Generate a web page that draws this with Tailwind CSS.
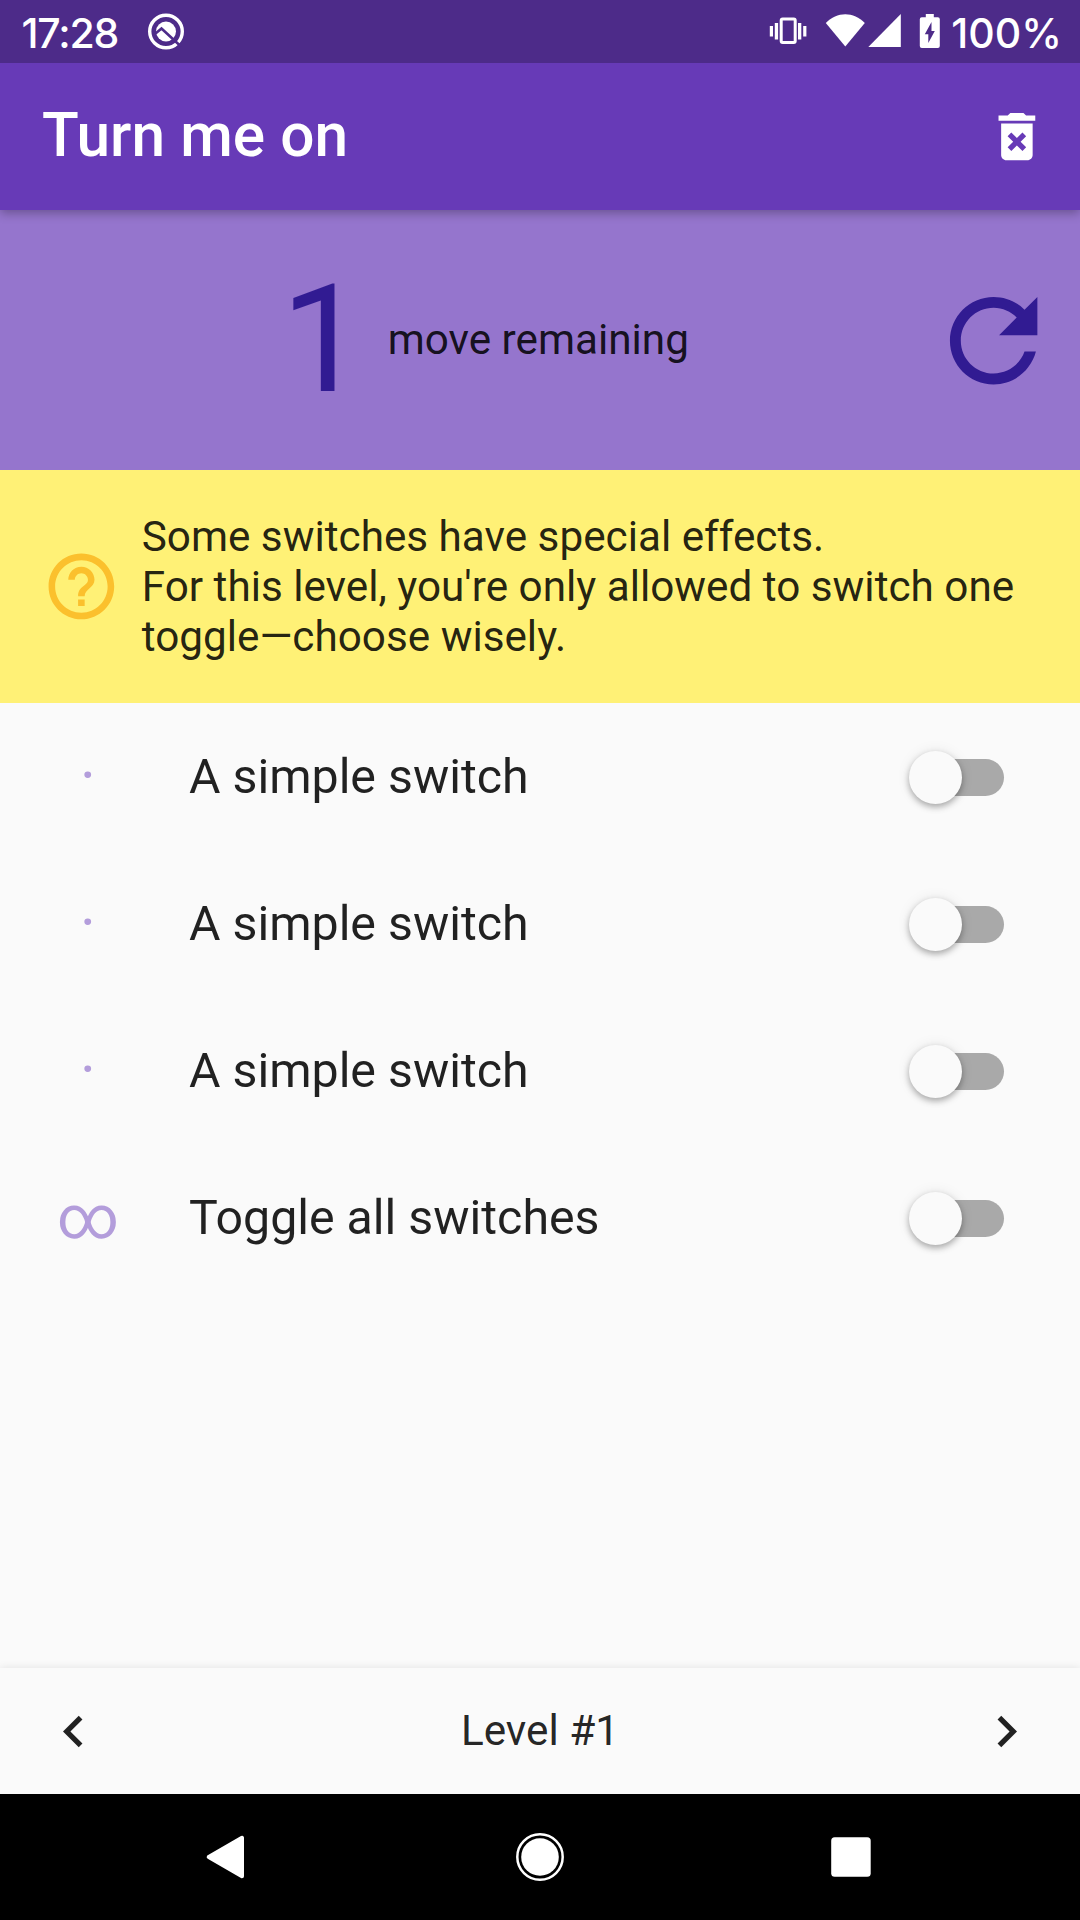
<!DOCTYPE html>
<html lang="en">
<head>
<meta charset="utf-8">
<title>Turn me on</title>
<script src="https://cdn.jsdelivr.net/npm/@tailwindcss/browser@4"></script>
</head>
<body class="bg-[#fafafa]">
<div class="flex flex-col w-[1080px] h-[1920px] overflow-hidden bg-[#fafafa] text-black/87 font-['Roboto',sans-serif]">

  <!-- Status bar -->
  <div class="relative z-20 flex items-center justify-between h-[63px] shrink-0 bg-[#4d2b89] text-white pl-[21.5px] pr-[18px] font-['Inter',sans-serif] font-medium text-[41px] leading-[63px]">
    <div class="flex items-center">
      <span class="tracking-[-1.2px] w-[122.5px] pt-[3px]">17:28</span>
      <svg class="w-[44px] h-[63px]" viewBox="144 0 44 63">
        <circle cx="166" cy="31.5" r="16.3" fill="none" stroke="#fff" stroke-width="3.4"/>
        <circle cx="166" cy="31.5" r="10" fill="#fff"/>
        <path d="M155.500 33.500L161.500 28.500L181 46.500" fill="none" stroke="#4d2b89" stroke-width="2.6"/>
      </svg>
    </div>
    <div class="flex items-center">
      <svg class="w-[184px] h-[63px]" viewBox="767.2 0 184 63" fill="#fff">
        <rect x="781.4" y="19" width="14" height="23.6" rx="1.5" fill="none" stroke="#fff" stroke-width="3"/>
        <path d="M775 23h3.3v16.5H775zM770 26h3.2v10.5H770zM798.2 23h3.3v16.5h-3.3zM803.4 26h3.2v10.5h-3.2z"/>
        <path d="M826 23C837 11.3 854 11.3 865 23L845.5 46.5Z"/>
        <path d="M868.5 47L901 14V47Z"/>
        <path fill-rule="evenodd" d="M926 14h8v3.3h4a2 2 0 0 1 2 2V46a2 2 0 0 1-2 2h-16a2 2 0 0 1-2-2V19.300a2 2 0 0 1 2-2h4zM931.700 22L925 34.200h3.500V43L935 31h-3.300z"/>
      </svg>
      <span class="pt-[3px]">100%</span>
    </div>
  </div>

  <!-- App bar -->
  <div class="relative z-10 flex items-center justify-between h-[147px] shrink-0 bg-[#673ab7] text-white pl-[42px] pr-[32px] shadow-[0_3px_10px_rgba(0,0,0,0.3)]">
    <h1 class="font-medium text-[60.375px] leading-[72px] tracking-[0.07px] pb-[2px]">Turn me on</h1>
    <svg class="size-[63px]" viewBox="-0.15 0 24 24" fill="currentColor"><path d="M6 19c0 1.100.9 2 2 2h8c1.100 0 2-.9 2-2V7H6v12zm2.460-7.120l1.410-1.410L12 12.590l2.120-2.120 1.410 1.410L13.410 14l2.120 2.120-1.410 1.410L12 15.410l-2.120 2.120-1.410-1.410L10.590 14l-2.130-2.120zM15.500 4l-1-1h-5l-1 1H5v2h14V4z"/></svg>
  </div>

  <!-- Remaining moves -->
  <div class="flex items-center h-[259.5px] shrink-0 bg-[#9575cd] pl-[42px] pr-[21px]">
    <div class="flex flex-1 items-center justify-center gap-[22px]">
      <span class="text-[150.94px] leading-[177px] text-[#311b92]">1</span>
      <span class="text-[42.26px] leading-[50px]">move remaining</span>
    </div>
    <svg class="size-[131.25px] mt-[1px] text-[#311b92]" viewBox="0 0 24 24" fill="currentColor"><path d="M17.650 6.350C16.200 4.900 14.210 4 12 4c-4.420 0-7.990 3.580-7.990 8s3.570 8 7.990 8c3.730 0 6.840-2.550 7.730-6h-2.080c-.820 2.330-3.040 4-5.650 4-3.310 0-6-2.690-6-6s2.690-6 6-6c1.660 0 3.140.690 4.220 1.780L13 11h7V4l-2.350 2.350z"/></svg>
  </div>

  <!-- Hint -->
  <div class="flex items-center gap-[21px] h-[233.75px] shrink-0 bg-[#fff176] pl-[42px]">
    <svg class="size-[78.75px] shrink-0 text-[#fbc02d]" viewBox="0 0 24 24" fill="currentColor"><path d="M11 18h2v-2h-2v2zm1-16C6.480 2 2 6.480 2 12s4.480 10 10 10 10-4.480 10-10S17.520 2 12 2zm0 18c-4.410 0-8-3.590-8-8s3.590-8 8-8 8 3.590 8 8-3.590 8-8 8zm0-14c-2.210 0-4 1.790-4 4h2c0-1.100.9-2 2-2s2 .9 2 2c0 2-3 1.750-3 5h2c0-2.250 3-2.500 3-5 0-2.210-1.790-4-4-4z"/></svg>
    <p class="pt-[1px] text-[42.26px] leading-[50px] whitespace-nowrap">Some switches have special effects.<br>For this level, you're only allowed to switch one<br>toggle—choose wisely.</p>
  </div>

  <!-- Switches -->
  <div class="flex-1">
    <div class="flex items-center h-[147px] pl-[42px] pr-[76px]">
      <span class="w-[92px] text-center text-[60.375px] leading-[71px] pb-[1px] text-[#b39ddb]">·</span>
      <span class="flex-1 pl-[55px] pb-[1px] text-[48.3px] leading-[57px]">A simple switch</span>
      <span class="flex items-center w-[86.500px] h-[36.750px] mt-[1px] rounded-full bg-[#a9a9a9]"><span class="size-[52.500px] -ml-[8.500px] shrink-0 rounded-full bg-[#fafafa] shadow-[0_3px_6px_rgba(0,0,0,0.3),0_0_14px_rgba(0,0,0,0.08)]"></span></span>
    </div>
    <div class="flex items-center h-[147px] pl-[42px] pr-[76px]">
      <span class="w-[92px] text-center text-[60.375px] leading-[71px] pb-[1px] text-[#b39ddb]">·</span>
      <span class="flex-1 pl-[55px] pb-[1px] text-[48.3px] leading-[57px]">A simple switch</span>
      <span class="flex items-center w-[86.500px] h-[36.750px] mt-[1px] rounded-full bg-[#a9a9a9]"><span class="size-[52.500px] -ml-[8.500px] shrink-0 rounded-full bg-[#fafafa] shadow-[0_3px_6px_rgba(0,0,0,0.3),0_0_14px_rgba(0,0,0,0.08)]"></span></span>
    </div>
    <div class="flex items-center h-[147px] pl-[42px] pr-[76px]">
      <span class="w-[92px] text-center text-[60.375px] leading-[71px] pb-[1px] text-[#b39ddb]">·</span>
      <span class="flex-1 pl-[55px] pb-[1px] text-[48.3px] leading-[57px]">A simple switch</span>
      <span class="flex items-center w-[86.500px] h-[36.750px] mt-[1px] rounded-full bg-[#a9a9a9]"><span class="size-[52.500px] -ml-[8.500px] shrink-0 rounded-full bg-[#fafafa] shadow-[0_3px_6px_rgba(0,0,0,0.3),0_0_14px_rgba(0,0,0,0.08)]"></span></span>
    </div>
    <div class="flex items-center h-[147px] pl-[42px] pr-[76px]">
      <span class="w-[92px] text-center text-[60.375px] leading-[71px] pb-[1px] text-[#b39ddb]">∞</span>
      <span class="flex-1 pl-[55px] pb-[1px] text-[48.3px] leading-[57px]">Toggle all switches</span>
      <span class="flex items-center w-[86.500px] h-[36.750px] mt-[1px] rounded-full bg-[#a9a9a9]"><span class="size-[52.500px] -ml-[8.500px] shrink-0 rounded-full bg-[#fafafa] shadow-[0_3px_6px_rgba(0,0,0,0.3),0_0_14px_rgba(0,0,0,0.08)]"></span></span>
    </div>
  </div>

  <!-- Level bar -->
  <div class="flex items-center justify-between h-[126px] shrink-0 bg-[#fafafa] px-[42px] shadow-[0_0_8px_rgba(0,0,0,0.1)]">
    <svg class="size-[63px]" viewBox="0 0 24 24" fill="currentColor"><path d="M15.410 7.410L14 6l-6 6 6 6 1.410-1.410L10.830 12z"/></svg>
    <span class="text-[42.26px] leading-[50px]">Level #1</span>
    <svg class="size-[63px]" viewBox="0 0 24 24" fill="currentColor"><path d="M10 6L8.590 7.410 13.170 12l-4.580 4.590L10 18l6-6z"/></svg>
  </div>

  <!-- Navigation bar -->
  <div class="relative flex items-center justify-center h-[126px] shrink-0 bg-black">
    <svg class="w-[315px] h-[126px]" viewBox="68 0 315 126"><path d="M242 43.800V82.200L208.700 63Z" fill="#fff" stroke="#fff" stroke-width="4" stroke-linejoin="round"/></svg>
    <svg class="w-[315px] h-[126px]" viewBox="383 0 315 126"><circle cx="540" cy="63" r="22.700" fill="none" stroke="#fff" stroke-width="2.500"/><circle cx="540" cy="63" r="18.800" fill="#fff"/></svg>
    <svg class="w-[315px] h-[126px]" viewBox="698 0 315 126"><rect x="831.200" y="43.200" width="39.500" height="39.500" rx="3.500" fill="#fff"/></svg>
  </div>
</div>
</body>
</html>
